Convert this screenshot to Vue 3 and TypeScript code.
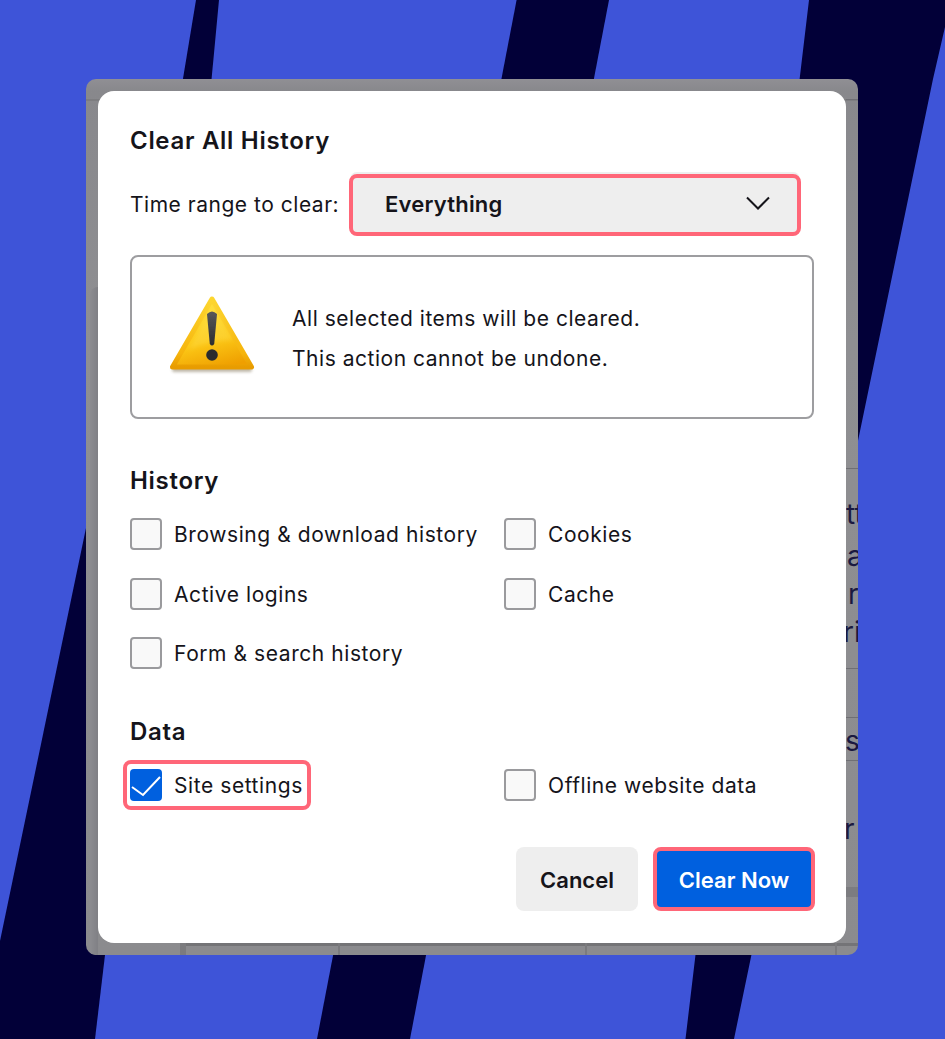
<script setup lang="ts">
interface Option {
  label: string
  checked?: boolean
  focused?: boolean
}

const historyOptions: Option[] = [
  { label: 'Browsing & download history' },
  { label: 'Cookies' },
  { label: 'Active logins' },
  { label: 'Cache' },
  { label: 'Form & search history' },
]

const dataOptions: Option[] = [
  { label: 'Site settings', checked: true, focused: true },
  { label: 'Offline website data' },
]

const ghostLetters = [
  { text: 'tt', top: 419, left: 760 },
  { text: 'a', top: 461, left: 761 },
  { text: 'r', top: 499, left: 762 },
  { text: 'ri', top: 537, left: 757 },
  { text: 'sc', top: 646, left: 759 },
  { text: 'r', top: 734, left: 758 },
]

const ghostLines = [20, 389, 589, 638, 681]
const ghostTicks = [252, 499, 749]

const stripes = [
  '196,0 219,0 170,520 110,520',
  '516.6,0 609,0 410,1039 317,1039',
  '809,0 945,0 945,27 933,79 734,1039 685.5,1039',
  '86,528 150,400 105,955 95,1039 0,1039 0,941',
]
</script>

<template>
  <div class="page">
    <svg class="backdrop" viewBox="0 0 945 1039" width="945" height="1039" aria-hidden="true">
      <rect width="945" height="1039" fill="#3e54d8" />
      <polygon v-for="points in stripes" :key="points" :points="points" fill="#020038" />
    </svg>

    <div class="window">
      <div class="ghost" aria-hidden="true">
        <div class="ghost-top"></div>
        <div class="ghost-side"></div>
        <div class="ghost-band"></div>
        <div class="ghost-foot"></div>
        <div class="ghost-corner"></div>
        <div v-for="y in ghostLines" :key="y" class="ghost-line" :style="{ top: y + 'px' }"></div>
        <div v-for="x in ghostTicks" :key="x" class="ghost-tick" :style="{ left: x + 'px' }"></div>
        <span
          v-for="letter in ghostLetters"
          :key="letter.top"
          class="ghost-letter"
          :style="{ top: letter.top + 'px', left: letter.left + 'px' }"
        >{{ letter.text }}</span>
      </div>

      <section class="dialog">
        <h1 class="title">Clear All History</h1>

        <div class="range">
          <span class="range-label">Time range to clear:</span>
          <div class="select">
            <span>Everything</span>
            <svg width="24" height="14" viewBox="0 0 24 14" aria-hidden="true">
              <path d="M1 1.5 L12 12.5 L23 1.5" fill="none" stroke="#15141a" stroke-width="2" />
            </svg>
          </div>
        </div>

        <div class="warning">
          <svg class="warning-icon" width="90" height="84" viewBox="0 0 90 84" aria-hidden="true">
            <defs>
              <linearGradient id="warnFill" x1="0.35" y1="0" x2="0.65" y2="1">
                <stop offset="0" stop-color="#ffe033" />
                <stop offset="0.6" stop-color="#fcc816" />
                <stop offset="1" stop-color="#ef9f00" />
              </linearGradient>
              <linearGradient id="warnEdge" x1="0" y1="0" x2="0" y2="1">
                <stop offset="0" stop-color="#fdd62e" />
                <stop offset="0.8" stop-color="#f6b40c" />
                <stop offset="1" stop-color="#e89c00" />
              </linearGradient>
              <linearGradient id="warnBar" x1="0" y1="0" x2="0" y2="1">
                <stop offset="0" stop-color="#58585a" />
                <stop offset="1" stop-color="#2c2c2e" />
              </linearGradient>
              <filter id="warnShadow" x="-10%" y="-10%" width="120%" height="125%">
                <feGaussianBlur stdDeviation="1.6" />
              </filter>
              <filter id="warnSoft" x="-30%" y="-10%" width="160%" height="120%">
                <feGaussianBlur stdDeviation="0.6" />
              </filter>
              <filter id="warnGloss" x="-20%" y="-20%" width="140%" height="140%">
                <feGaussianBlur stdDeviation="2" />
              </filter>
            </defs>
            <path
              d="M45 8 L83 75 L7 75 Z"
              fill="#6f6140"
              opacity="0.45"
              stroke="#6f6140"
              stroke-width="4"
              stroke-linejoin="round"
              filter="url(#warnShadow)"
              transform="translate(0 1)"
            />
            <path
              d="M45 5 L84.5 73 L5.5 73 Z"
              fill="url(#warnFill)"
              stroke="url(#warnEdge)"
              stroke-width="5"
              stroke-linejoin="round"
            />
            <path
              d="M45 9 L66 46 Q42 46 22 56 Z"
              fill="#fff6a0"
              opacity="0.16"
              filter="url(#warnGloss)"
            />
            <path
              d="M40 20 Q45 15 50 20 L47.2 50 Q45 53 42.8 50 Z"
              fill="url(#warnBar)"
              filter="url(#warnSoft)"
            />
            <circle cx="45" cy="61" r="5.8" fill="#2c2c2e" filter="url(#warnSoft)" />
          </svg>
          <div class="warning-text">
            <p>All selected items will be cleared.</p>
            <p>This action cannot be undone.</p>
          </div>
        </div>

        <h2 class="heading history-heading">History</h2>
        <div class="options">
          <label v-for="option in historyOptions" :key="option.label" class="option">
            <input class="box" type="checkbox" />
            <span>{{ option.label }}</span>
          </label>
        </div>

        <h2 class="heading data-heading">Data</h2>
        <div class="data-options">
          <label
            v-for="option in dataOptions"
            :key="option.label"
            class="option"
            :class="{ focused: option.focused }"
          >
            <span v-if="option.checked" class="box checked">
              <svg width="32" height="32" viewBox="0 0 32 32" aria-hidden="true">
                <path d="M2 18 L13 26 L30 8" fill="none" stroke="#fff" stroke-width="2" />
              </svg>
            </span>
            <input v-else class="box" type="checkbox" />
            <span>{{ option.label }}</span>
          </label>
        </div>

        <div class="actions">
          <button class="btn cancel" type="button">Cancel</button>
          <button class="btn primary" type="button">Clear Now</button>
        </div>
      </section>
    </div>
  </div>
</template>

<style scoped>
.page {
  position: relative;
  width: 945px;
  height: 1039px;
  overflow: hidden;
  padding: 79px 0 0 86px;
  box-sizing: border-box;
  font-family: Inter, "Liberation Sans", sans-serif;
  color: #15141a;
}

.backdrop {
  position: absolute;
  left: 0;
  top: 0;
}

.window {
  position: relative;
  width: 772px;
  height: 876px;
  padding: 12px;
  box-sizing: border-box;
  border-radius: 10px;
  overflow: hidden;
  background: linear-gradient(180deg, #908f94 0, #88888c 12px, #8f8f92 30%, #8b8b8e 100%);
}

.ghost {
  position: absolute;
  inset: 0;
}

.ghost-top {
  position: absolute;
  left: 0;
  right: 0;
  top: 20px;
  height: 2px;
  background: #7d7d80;
}

.ghost-side {
  position: absolute;
  left: 4px;
  top: 208px;
  bottom: 0;
  width: 8px;
  border-top-left-radius: 8px;
  background: linear-gradient(90deg, #8c8c90, #808085);
}

.ghost-band {
  position: absolute;
  right: 0;
  top: 808px;
  width: 12px;
  height: 10px;
  background: #7c7c80;
}

.ghost-foot {
  position: absolute;
  left: 94px;
  right: 0;
  top: 864px;
  height: 3px;
  background: #747477;
}

.ghost-corner {
  position: absolute;
  left: 94px;
  top: 864px;
  bottom: 0;
  width: 6px;
  background: #7b7b7e;
}

.ghost-line {
  position: absolute;
  right: 0;
  width: 12px;
  height: 1px;
  background: #6f6f74;
}

.ghost-tick {
  position: absolute;
  top: 864px;
  bottom: 0;
  width: 2px;
  background: #7b7b7e;
}

.ghost-letter {
  position: absolute;
  font-size: 28px;
  line-height: 32px;
  color: #1b1940;
}

.dialog {
  position: relative;
  height: 852px;
  padding: 32px;
  box-sizing: border-box;
  border-radius: 16px;
  background: #fff;
}

.title,
.heading {
  margin: 0;
  padding-top: 1px;
  height: 34px;
  box-sizing: border-box;
  font-size: 24px;
  line-height: 34px;
  font-weight: 600;
  letter-spacing: 0.7px;
}

.range {
  display: flex;
  align-items: center;
  margin-top: 17px;
  height: 62px;
}

.range-label {
  width: 219px;
  flex: none;
  font-size: 21px;
  letter-spacing: 0.52px;
  margin-top: -2px;
}

.select {
  display: flex;
  align-items: center;
  justify-content: space-between;
  width: 452px;
  height: 62px;
  box-sizing: border-box;
  padding: 0 27px 2px 32px;
  border: 4px solid #ff6678;
  border-radius: 8px;
  background: #eeeeee;
  box-shadow: 0 -3px 0 -1px #eeeeee;
  font-size: 22px;
  font-weight: 600;
  letter-spacing: 0.2px;
}

.select svg {
  margin-top: -3px;
}

.warning {
  display: flex;
  align-items: center;
  margin-top: 19px;
  height: 164px;
  box-sizing: border-box;
  padding-left: 35px;
  border: 2px solid #9d9da0;
  border-radius: 8px;
}

.warning-icon {
  flex: none;
  margin-right: 35px;
  margin-top: -3px;
}

.warning-text {
  padding-top: 4px;
}

.warning-text p {
  margin: 0;
  font-size: 21px;
  letter-spacing: 0.53px;
  line-height: 40px;
}

.history-heading {
  margin-top: 44px;
}

.options {
  display: grid;
  grid-template-columns: 374px 1fr;
  row-gap: 28px;
  margin-top: 21px;
}

.option {
  display: flex;
  align-items: center;
  gap: 12px;
  height: 32px;
  font-size: 21px;
  letter-spacing: 0.57px;
}

.options .option:nth-child(5) {
  margin-top: -1px;
}

.box {
  flex: none;
  appearance: none;
  display: block;
  width: 32px;
  height: 32px;
  margin: 0;
  box-sizing: border-box;
  border: 2px solid #9a9a9d;
  border-radius: 4px;
  background: #f9f9f9;
}

.box.checked {
  border: none;
  background: #0060df;
}

.box.checked svg {
  display: block;
}

.data-heading {
  margin-top: 45px;
}

.data-options {
  display: grid;
  grid-template-columns: 374px 1fr;
  align-items: center;
  height: 50px;
  margin-top: 12px;
}

.option.focused {
  justify-self: start;
  height: 50px;
  width: 188px;
  margin-left: -7px;
  padding-left: 3px;
  box-sizing: border-box;
  border: 4px solid #ff6678;
  border-radius: 8px;
}

.actions {
  display: flex;
  justify-content: flex-end;
  gap: 15px;
  margin-top: 37px;
  margin-right: -1px;
}

.btn {
  height: 64px;
  box-sizing: border-box;
  border: none;
  border-radius: 8px;
  padding-top: 3px;
  font-family: inherit;
  font-size: 22px;
  font-weight: 600;
}

.cancel {
  width: 122px;
  background: #eeeeee;
  color: #15141a;
}

.primary {
  width: 162px;
  border: 4px solid #ff6678;
  background: #0060df;
  color: #fff;
}
</style>
